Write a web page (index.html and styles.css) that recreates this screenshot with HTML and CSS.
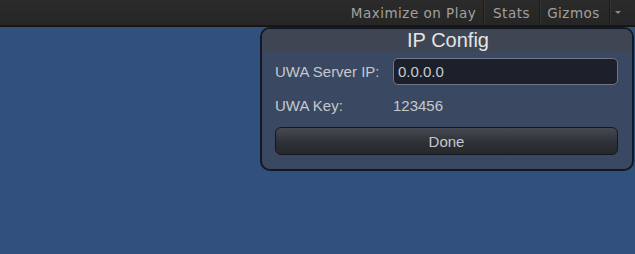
FILE: index.html
```html
<!DOCTYPE html>
<html lang="en">
<head>
    <meta charset="UTF-8">
    <meta name="viewport" content="width=device-width, initial-scale=1.0">
    <title>IP Config</title>
    <link rel="stylesheet" href="styles.css">
</head>
<body>
    <header class="toolbar">
        <div class="toolbar-buttons">
            <span class="tool-btn btn-max">Maximize on Play</span>
            <span class="tool-btn btn-stats">Stats</span>
            <span class="tool-btn btn-gizmos">Gizmos</span>
            <span class="tool-btn btn-arrow"><span class="arrow"></span></span>
        </div>
    </header>
    <main class="scene">
        <div class="window">
            <div class="window-title">IP Config</div>
            <div class="window-body">
                <div class="field-row">
                    <label for="ip">UWA Server IP:</label>
                    <input type="text" id="ip" value="0.0.0.0">
                </div>
                <div class="field-row key-row">
                    <span class="label">UWA Key:</span>
                    <span class="value">123456</span>
                </div>
                <button class="done-btn">Done</button>
            </div>
        </div>
    </main>
</body>
</html>
```

FILE: styles.css
```css
body {
    margin: 0;
    padding: 0;
    width: 635px;
    height: 254px;
    overflow: hidden;
    display: flex;
    flex-direction: column;
    background-color: #31507b;
    font-family: "Liberation Sans", Arial, sans-serif;
}

.toolbar {
    height: 25px;
    background: linear-gradient(#2b2b2b, #262626);
    border-bottom: 2px solid #161616;
    display: flex;
    justify-content: flex-end;
}

.toolbar-buttons {
    display: flex;
    height: 100%;
}

.tool-btn {
    display: flex;
    align-items: center;
    justify-content: center;
    height: 100%;
    color: #a0a0a0;
    font-family: "DejaVu Sans", sans-serif;
    font-size: 13.5px;
    letter-spacing: 0.5px;
    border-left: 1px solid #1c1c1c;
    box-shadow: inset 1px 0 0 #333;
    box-sizing: border-box;
}

.btn-max {
    width: 143px;
    padding-left: 4px;
    border-left: none;
    box-shadow: none;
}

.btn-stats {
    width: 56px;
}

.btn-gizmos {
    width: 70px;
    padding-right: 2px;
}

.btn-arrow {
    width: 26px;
    justify-content: flex-start;
    padding-left: 5px;
}

.arrow {
    width: 0;
    height: 0;
    border-left: 3px solid transparent;
    border-right: 3px solid transparent;
    border-top: 3px solid #8a8a8a;
}

.scene {
    flex: 1;
    position: relative;
}

.window {
    position: absolute;
    left: 260px;
    top: 0;
    width: 374px;
    height: 144px;
    box-sizing: border-box;
    border: 2px solid #121824;
    border-radius: 10px;
    background-color: #3a4861;
    overflow: hidden;
    display: flex;
    flex-direction: column;
}

.window-title {
    height: 23px;
    background-color: #3f4553;
    color: #e4e4e4;
    font-size: 20px;
    line-height: 23px;
    text-align: center;
    padding-left: 2px;
}

.window-body {
    display: flex;
    flex-direction: column;
    padding: 6px 14px 0 13px;
}

.field-row {
    display: flex;
    align-items: center;
    height: 27px;
    color: #c4c8cf;
    font-size: 15px;
}

.field-row label,
.field-row .label {
    width: 118px;
}

.field-row input {
    flex: 1;
    height: 27px;
    box-sizing: border-box;
    padding: 0 4px;
    background-color: #1b202b;
    border: 1px solid #707684;
    border-radius: 5px;
    color: #c8ccd2;
    font-family: "Liberation Sans", Arial, sans-serif;
    font-size: 15px;
}

.key-row {
    margin-top: 7px;
    height: 26px;
}

.done-btn {
    margin-top: 9px;
    height: 28px;
    border: 1px solid #14171c;
    border-radius: 6px;
    background: linear-gradient(#454951, #2c2f35 60%, #25282d);
    color: #c6c8cc;
    font-family: "Liberation Sans", Arial, sans-serif;
    font-size: 15px;
}
```
